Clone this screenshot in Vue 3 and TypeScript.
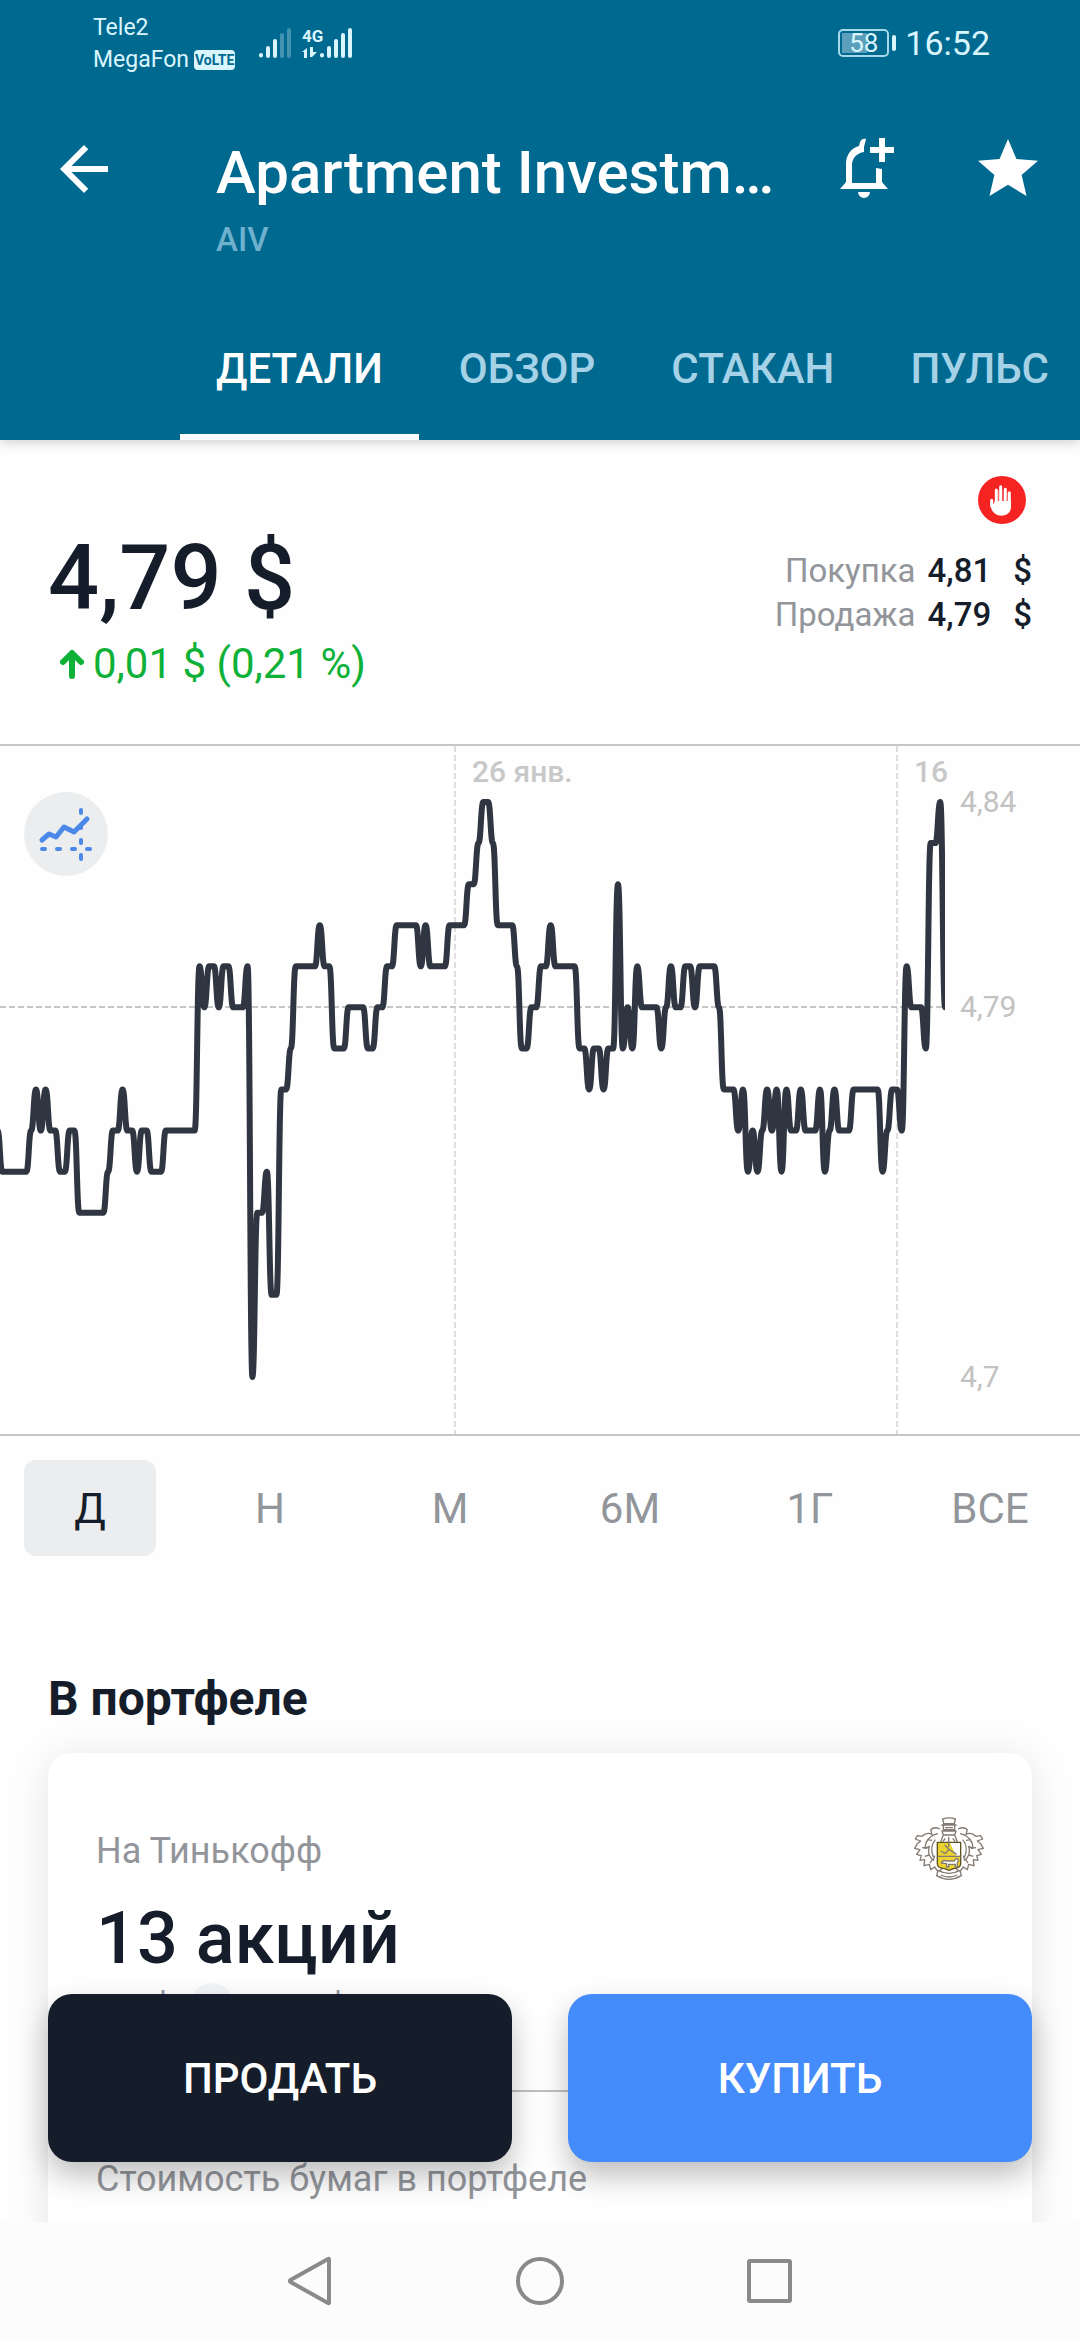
<script setup lang="ts">
import { ref } from 'vue'

interface RangeOption {
  id: string
  label: string
}

const tabs: string[] = ['ДЕТАЛИ', 'ОБЗОР', 'СТАКАН', 'ПУЛЬС']
const activeTab = ref<string>('ДЕТАЛИ')

const ranges: RangeOption[] = [
  { id: 'day', label: 'Д' },
  { id: 'week', label: 'Н' },
  { id: 'month', label: 'М' },
  { id: 'half', label: '6М' },
  { id: 'year', label: '1Г' },
  { id: 'all', label: 'ВСЕ' },
]
const activeRange = ref<string>('day')

const quotes = [
  { label: 'Покупка', value: '4,81' },
  { label: 'Продажа', value: '4,79' },
]

// Price history as runs of [cents above 4,70, number of ticks].
const runs: [number, number][] = [
  [6, 1], [5, 6], [6, 1], [7, 1], [6, 1], [7, 1], [6, 2], [5, 2], [6, 2], [4, 6],
  [5, 1], [6, 2], [7, 1], [6, 2], [5, 1], [6, 2], [5, 3], [6, 7], [10, 1], [9, 1],
  [10, 2], [9, 1], [10, 2], [9, 3], [10, 1], [0, 1], [4, 2], [5, 1], [2, 2], [7, 2],
  [8, 1], [10, 5], [11, 1], [10, 2], [8, 3], [9, 4], [8, 2], [9, 2], [10, 2], [11, 5],
  [10, 1], [11, 1], [10, 4], [11, 4], [12, 2], [13, 1], [14, 2], [13, 1], [11, 4], [10, 1],
  [8, 2], [9, 2], [10, 2], [11, 1], [10, 5], [8, 2], [7, 1], [8, 2], [7, 1], [8, 2],
  [12, 1], [8, 1], [9, 1], [8, 1], [10, 1], [9, 4], [8, 1], [9, 1], [10, 1], [9, 2],
  [10, 2], [9, 1], [10, 4], [9, 1], [7, 3], [6, 1], [7, 1], [5, 1], [6, 1], [5, 1],
  [6, 1], [7, 1], [6, 1], [7, 1], [5, 1], [7, 1], [6, 2], [7, 1], [6, 3], [7, 1],
  [5, 1], [6, 1], [7, 1], [6, 3], [7, 6], [5, 1], [6, 1], [7, 2], [6, 1], [10, 1],
  [9, 3], [8, 1], [13, 2], [14, 1], [9, 1],
]

const tickStep = 4.81
const firstTick = -2.5
const centStep = 41.07
const topLevel = 56

function buildLine(): string {
  const levels = runs.flatMap(([level, count]) => Array<number>(count).fill(level))
  const x = (i: number) => firstTick + i * tickStep
  const y = (level: number) => topLevel + (14 - level) * centStep
  let d = `M${x(0)} ${y(levels[0])}`
  for (let i = 1; i < levels.length; i++) {
    const mid = (x(i - 1) + x(i)) / 2
    d += `C${mid.toFixed(2)} ${y(levels[i - 1]).toFixed(2)} ${mid.toFixed(2)} ${y(levels[i]).toFixed(2)} ${x(i).toFixed(2)} ${y(levels[i]).toFixed(2)}`
  }
  return d
}

const linePath = buildLine()
</script>

<template>
  <div class="screen">
    <header class="header">
      <div class="status">
        <div class="carriers">
          <span>Tele2</span>
          <span class="carrier">MegaFon <b class="volte">VoLTE</b></span>
        </div>
        <svg class="signals" viewBox="0 0 96 32" aria-hidden="true">
          <g stroke="#d9f6ff" stroke-width="4" stroke-linecap="round">
            <path d="M3 28v0.500M10 21v8M17 14v15" />
            <path d="M24 8v21M31 3v26" opacity="0.300" />
            <path d="M64 28v0.500M71 21v8M78 14v15M85 8v21M92 3v26" />
          </g>
          <text x="44" y="15" fill="#d9f6ff" font-size="17" font-weight="700">4G</text>
          <path d="M44 25l5-4v10h-3v-6zM52 20h3v5l4 0-5 5h-2z" fill="#d9f6ff" />
        </svg>
        <div class="status-right">
          <div class="battery"><span>58</span></div>
          <i class="battery-tip"></i>
          <span class="clock">16:52</span>
        </div>
      </div>

      <div class="toolbar">
        <button class="icon-button" type="button" aria-label="Назад">
          <svg viewBox="0 0 24 24"><path fill="#fff" d="M20 11H7.830l5.590-5.590L12 4l-8 8 8 8 1.410-1.410L7.830 13H20z" /></svg>
        </button>
        <div class="heading">
          <h1>Apartment Investm…</h1>
          <p>AIV</p>
        </div>
        <button class="icon-button" type="button" aria-label="Создать уведомление">
          <svg viewBox="0 0 72 72" fill="#fff">
            <path d="M6 56l6-7V31c0-9 5-16 13-18l1-4c1-3 4-4 6-3l-2 8v5c-7 1-12 6-12 13v18h24V35l6 1v13l6 7z" />
            <path d="M24 59h12a6 6 0 0 1-12 0zM45 5h6v9h9v6h-9v9h-6v-9h-9v-6h9z" />
          </svg>
        </button>
        <button class="icon-button star" type="button" aria-label="В избранное">
          <svg viewBox="0 0 24 24"><path fill="#fff" d="M12 17.270L18.180 21l-1.640-7.030L22 9.240l-7.190-.61L12 2 9.190 8.630 2 9.240l5.460 4.730L5.820 21z" /></svg>
        </button>
      </div>

      <nav class="tabs">
        <button
          v-for="tab in tabs"
          :key="tab"
          type="button"
          class="tab"
          :class="{ active: tab === activeTab }"
          @click="activeTab = tab"
        >{{ tab }}</button>
      </nav>
    </header>

    <main class="content">
      <section class="summary">
        <div>
          <div class="price">4,79 $</div>
          <div class="change">
            <svg viewBox="0 0 24 30" aria-hidden="true">
              <path d="M12 27V5M3 13l9-9 9 9" fill="none" stroke="#0eb138" stroke-width="6" stroke-linecap="round" stroke-linejoin="round" />
            </svg>
            <span>0,01 $ (0,21 %)</span>
          </div>
        </div>
        <div class="quotes">
          <svg class="halt" viewBox="0 0 144 144" aria-label="Торги приостановлены">
            <circle cx="72" cy="72" r="72" fill="#f62323" />
            <g stroke="#fff" stroke-width="9" stroke-linecap="round">
              <path d="M55 42v45M68 32v50M82 40v45M94 50v40M41 73v16" />
            </g>
            <path d="M37 82q4-6 9 2l5-9h48v17c0 16-11 27-29 27-17 0-33-13-33-37z" fill="#fff" />
            <path d="M61.500 44v30M75 44v30M88 50v24" stroke="#f87070" stroke-width="3" />
          </svg>
          <div v-for="quote in quotes" :key="quote.label" class="quote">
            <span class="quote-label">{{ quote.label }}</span>
            <span>{{ quote.value }}</span>
            <span class="currency">$</span>
          </div>
        </div>
      </section>

      <section class="chart">
        <svg class="plot" viewBox="0 0 1080 688" role="img" aria-label="График цены">
          <defs>
            <clipPath id="plot-area"><rect width="945" height="688" /></clipPath>
          </defs>
          <g fill="none" stroke-width="2" stroke-dasharray="6 3">
            <path d="M455 0V688M897 0V688" stroke="#dfdfdf" />
            <path d="M0 261H945" stroke="#c6c6c6" />
          </g>
          <path :d="linePath" class="line" clip-path="url(#plot-area)" />
          <g fill="#c8c8c8" font-size="30" font-weight="500">
            <text x="472" y="36">26 янв.</text>
            <text x="914" y="36">16</text>
          </g>
          <g fill="#c2c2c2" font-size="30">
            <text x="960" y="66">4,84</text>
            <text x="960" y="271">4,79</text>
            <text x="960" y="641">4,7</text>
          </g>
        </svg>
        <button class="chart-mode" type="button" aria-label="Режим графика">
          <svg viewBox="0 0 84 84" fill="none" stroke="#4a88ea" stroke-linecap="round">
            <path d="M18 48l7-6 7 3 8-10 10 5 13-13" stroke-width="5" stroke-linejoin="round" />
            <path d="M18 57h3M33 57h3M48 57h3M63 57h3M57 18v3M57 33v3M57 48v3M57 63v4" stroke-width="4" />
          </svg>
        </button>
      </section>

      <div class="ranges">
        <button
          v-for="range in ranges"
          :key="range.id"
          type="button"
          class="range"
          :class="{ active: range.id === activeRange }"
          @click="activeRange = range.id"
        >{{ range.label }}</button>
      </div>

      <section class="portfolio">
        <h2>В портфеле</h2>
        <article class="card">
          <div class="holding">
            <div>
              <p class="muted">На Тинькофф</p>
              <p class="amount">13 акций</p>
            </div>
            <svg class="crest" viewBox="0 0 210 192" fill="none" stroke="#837a72" stroke-width="4" stroke-linejoin="round">
              <path d="M86 6q19-7 38 0l-3 14H89zM82 24h46M88 24v14h34V24M84 42h42l-4 12H88zM88 54l-8 20M122 54l8 20M93 32h24" />
              <path d="M78 36c-12-6-22-4-28 2l4 14c-12-6-24 0-30 6l-14-2-6 10 16 6-10 8-8 14 16 4-10 14 14 4-4 14 14-2-2 18 16-4 4 16 12-8 10 14 12-8" />
              <path d="M132 36c12-6 22-4 28 2l-4 14c12-6 24 0 30 6l14-2 6 10-16 6 10 8 8 14-16 4 10 14-14 4 4 14-14-2 2 18-16-4-4 16-12-8-10 14-12-8" />
              <path d="M72 50c-22 4-40 22-38 44l12-6c-6 18 0 32 12 42l4-14M64 68c-12 14-14 32-6 52M40 68l14 2M24 92l16 2M32 118l14-4M48 138l8-12" />
              <path d="M138 50c22 4 40 22 38 44l-12-6c6 18 0 32-12 42l-4-14M146 68c12 14 14 32 6 52M170 68l-14 2M186 92l-16 2M178 118l-14-4M162 138l-8-12" />
              <path d="M72 160q33 18 66 0l4 16q-37 22-74 0zM80 174q25 12 50 0" fill="#fff" />
              <path d="M70 76h70v64c0 12-12 14-22 15l-13 5-13-5c-10-1-22-3-22-15z" fill="#ecd32f" stroke="#5b5020" />
              <path d="M108 78h30v38h-12z" fill="#fff" stroke="none" />
              <path d="M70 118h70M80 102l14 8 12-14M92 84l14 14 22 14M104 60v30M94 64l-8 10M116 64l8 10" />
              <path d="M82 138c4-10 12-8 18-6h20l8-8 6 6-4 8v12h-6v-8h-20v8h-6v-10z" fill="#fff" />
            </svg>
          </div>
          <div class="average">
            <span>4,7 $</span>
            <i></i>
            <span>4,79 $</span>
          </div>
          <p class="muted total">Стоимость бумаг в портфеле</p>
        </article>
      </section>

      <div class="actions">
        <button type="button" class="action sell">ПРОДАТЬ</button>
        <button type="button" class="action buy">КУПИТЬ</button>
      </div>
    </main>

    <footer class="system-nav">
      <button type="button" aria-label="Назад">
        <svg viewBox="0 0 60 60"><path d="M48 8.500v43q0 1-1 .5L9.500 31q-1-1 0-2L47 8q1-.5 1 .5z" /></svg>
      </button>
      <button type="button" aria-label="Домой">
        <svg viewBox="0 0 60 60"><circle cx="30" cy="30" r="22" /></svg>
      </button>
      <button type="button" aria-label="Недавние">
        <svg viewBox="0 0 60 60"><rect x="10" y="10" width="41" height="40" rx="1" /></svg>
      </button>
    </footer>
  </div>
</template>

<style>
body {
  margin: 0;
  background: #fefefe;
}
</style>

<style scoped>
.screen {
  display: flex;
  flex-direction: column;
  height: 100vh;
  overflow: hidden;
  font-family: Roboto, 'Noto Sans', sans-serif;
  color: #151d2a;
  background: #fefefe;
}

button {
  padding: 0;
  border: 0;
  background: none;
  font-family: inherit;
  cursor: pointer;
}

svg {
  display: block;
}

h1,
h2,
p {
  margin: 0;
}

.header {
  position: relative;
  z-index: 1;
  flex: none;
  background: #006990;
  box-shadow: 0 2px 12px rgba(0, 0, 0, 0.2);
}

.status {
  display: flex;
  align-items: center;
  height: 86px;
  padding: 0 90px 0 93px;
  color: #d9f6ff;
}

.carriers {
  display: flex;
  flex-direction: column;
  width: 165px;
  padding-top: 2px;
  font-size: 23px;
  line-height: 32px;
}

.carrier {
  display: flex;
  align-items: center;
  gap: 5px;
}

.volte {
  padding: 0 1px;
  border-radius: 4px;
  background: #d9f6ff;
  color: #006990;
  font-size: 14px;
  line-height: 20px;
}

.signals {
  width: 96px;
  height: 32px;
}

.status-right {
  display: flex;
  align-items: center;
  margin-left: auto;
}

.battery {
  box-sizing: border-box;
  width: 51px;
  height: 28px;
  border: 2px solid #a5daeb;
  border-radius: 5px;
  background: linear-gradient(90deg, #5c9fba 58%, transparent 58%) 2px 2px / 43px 20px no-repeat;
  font-size: 26px;
  line-height: 24px;
  text-align: center;
}

.battery-tip {
  width: 4px;
  height: 16px;
  margin: 0 9px 0 3px;
  border-radius: 2px;
  background: #d9f6ff;
}

.clock {
  font-size: 34px;
  line-height: 40px;
}

.toolbar {
  display: flex;
  align-items: flex-start;
  padding: 47px 36px 0 48px;
}

.icon-button {
  flex: none;
  width: 72px;
  height: 72px;
}

.heading {
  flex: 1;
  min-width: 0;
  padding-left: 96px;
}

.heading h1 {
  font-size: 60px;
  font-weight: 500;
  line-height: 80px;
  color: #fff;
  white-space: nowrap;
}

.heading p {
  font-size: 33px;
  font-weight: 500;
  line-height: 54px;
  color: #6fb0cd;
}

.star {
  margin-left: 66px;
}

.tabs {
  display: flex;
  gap: 4px;
  margin-top: 29px;
  padding-left: 180px;
}

.tab {
  height: 144px;
  padding: 0 36px;
  font-size: 42px;
  font-weight: 500;
  color: #a5d2e6;
}

.tab.active {
  color: #fff;
  box-shadow: inset 0 -6px #fff;
}

.content {
  position: relative;
  flex: 1;
  min-height: 0;
  overflow: hidden;
}

.summary {
  display: flex;
  justify-content: space-between;
  padding: 36px 48px 45px;
}

.price {
  margin-top: 53px;
  font-size: 90px;
  font-weight: 500;
  line-height: 100px;
}

.change {
  display: flex;
  align-items: center;
  gap: 9px;
  padding-left: 12px;
  font-size: 42px;
  line-height: 70px;
  color: #0eb138;
}

.change svg {
  width: 24px;
  height: 30px;
}

.quotes {
  display: flex;
  flex-direction: column;
  align-items: flex-end;
  font-size: 33px;
  font-weight: 500;
  line-height: 44px;
}

.halt {
  width: 48px;
  height: 48px;
  margin: 0 6px 25px 0;
}

.quote {
  display: flex;
}

.quote-label {
  margin-right: 12px;
  font-weight: 400;
  color: #92959a;
}

.currency {
  margin-left: 22px;
}

.chart {
  position: relative;
  border-top: 2px solid #c6c6c6;
  border-bottom: 2px solid #c6c6c6;
}

.plot {
  width: 100%;
  height: auto;
}

.line {
  fill: none;
  stroke: #2f3642;
  stroke-width: 6;
  stroke-linejoin: round;
}

.chart-mode {
  position: absolute;
  top: 46px;
  left: 24px;
  width: 84px;
  height: 84px;
  border-radius: 50%;
  background: #ebedee;
}

.ranges {
  display: flex;
  gap: 48px;
  padding: 24px;
}

.range {
  flex: 1 1 0;
  min-width: 0;
  height: 96px;
  border-radius: 12px;
  font-size: 42px;
  color: #92959a;
}

.range.active {
  background: #ebedee;
  color: #151d2a;
}

.portfolio {
  padding: 87px 48px 0;
}

.portfolio h2 {
  margin-bottom: 22px;
  font-size: 48px;
  font-weight: 700;
  line-height: 64px;
}

.card {
  padding: 74px 0 200px 48px;
  border-radius: 24px;
  background: #fff;
  box-shadow: 0 4px 40px rgba(0, 0, 0, 0.1);
}

.holding {
  display: flex;
  justify-content: space-between;
  padding-right: 48px;
}

.muted {
  font-size: 36px;
  line-height: 48px;
  color: #92959a;
}

.amount {
  margin-top: 20px;
  font-size: 72px;
  font-weight: 500;
  line-height: 88px;
}

.crest {
  width: 70px;
  height: 64px;
  margin-top: -10px;
}

.average {
  display: flex;
  gap: 18px;
  height: 107px;
  border-bottom: 2px solid #c0c0c2;
  font-size: 36px;
  line-height: 52px;
  color: #92959a;
}

.average i {
  width: 42px;
  height: 42px;
  border-radius: 50%;
  background: #f3f5f7;
}

.total {
  margin-top: 63px;
}

.actions {
  position: absolute;
  right: 48px;
  bottom: 60px;
  left: 48px;
  display: flex;
  gap: 56px;
}

.action {
  flex: 1;
  height: 168px;
  border-radius: 24px;
  font-size: 42px;
  font-weight: 500;
  color: #fff;
  box-shadow: 0 14px 30px rgba(0, 0, 0, 0.26);
}

.sell {
  background: #151d2a;
}

.buy {
  background: #448bfb;
}

.system-nav {
  position: relative;
  display: flex;
  flex: none;
  align-items: center;
  justify-content: center;
  gap: 169px;
  height: 118px;
  background: #fcfcfc;
}

.system-nav button,
.system-nav svg {
  width: 60px;
  height: 60px;
}

.system-nav svg {
  fill: none;
  stroke: #8a8a8a;
  stroke-width: 4;
  stroke-linejoin: round;
}
</style>
